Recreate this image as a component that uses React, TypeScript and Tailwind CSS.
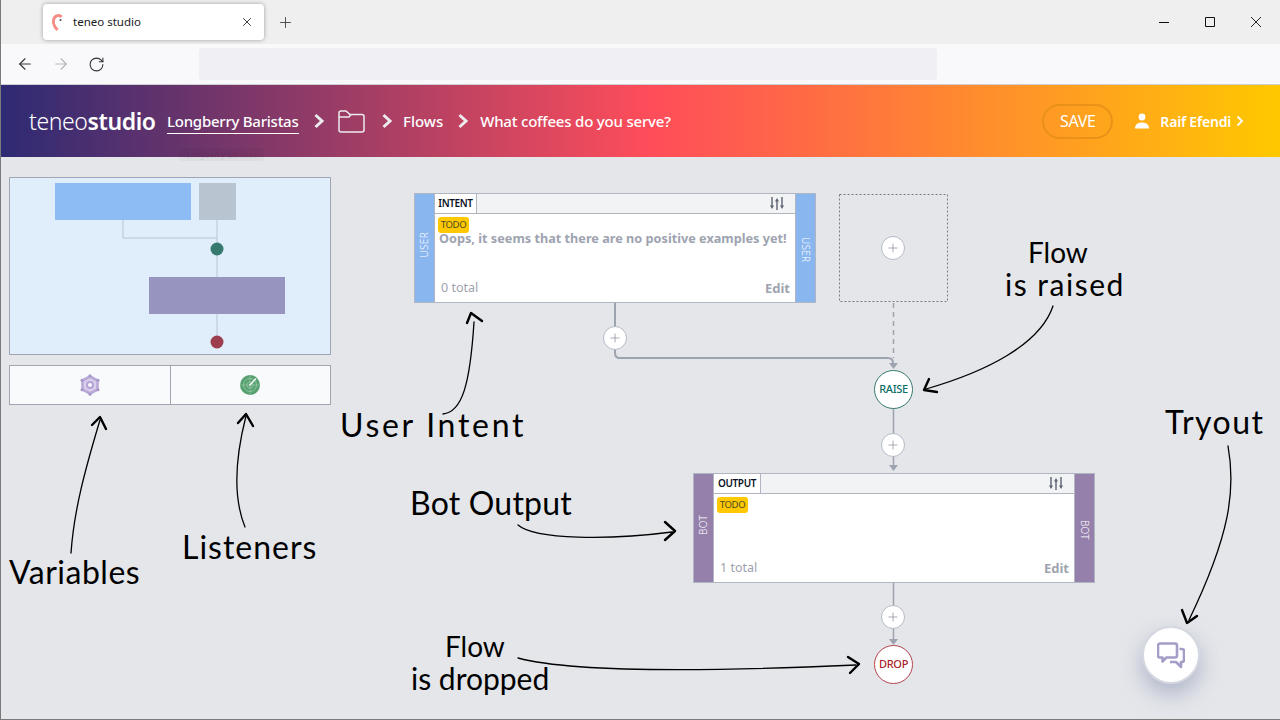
import React from "react";
import { ArrowLeft, ArrowRight, RotateCw, Plus, X } from "lucide-react";

const uiFont = "font-['Noto_Sans','Open_Sans',sans-serif]";
const noteFont = "font-['Lato','Noto_Sans',sans-serif]";

const Chevron = ({ className }: { className: string }) => (
  <svg viewBox="0 0 12 16" className={className} fill="none" stroke="#ecebee" strokeWidth="3">
    <path d="M2.5 2 L9 8 L2.5 14" />
  </svg>
);

// sliders glyph used in the card header
const SlidersGlyph = () => (
  <svg width="14" height="13" viewBox="0 0 14 13" fill="none" stroke="#5c6472" strokeWidth="1.4">
    <path d="M2 0v9M7 4v9M12 0v9" />
    <path d="M0 8.5h4L2 12zM5 4.5h4L7 1zM10 8.5h4L12 12z" fill="#5c6472" stroke="none" />
  </svg>
);

const PlusBubble = ({ className }: { className: string }) => (
  <div className={`absolute w-[24px] h-[24px] rounded-full bg-white border border-[#b4b9c4] flex items-center justify-center ${className}`}>
    <Plus size={14} strokeWidth={1.3} color="#8d93a1" />
  </div>
);

interface CardProps {
  className: string;
  strip: string;
  label: string;
  tab: string;
  tabWidth: string;
  total: string;
  message?: string;
}

const FlowCard: React.FC<CardProps> = ({ className, strip, label, tab, tabWidth, total, message }) => (
  <div className={`absolute w-[402px] h-[110px] flex border border-[#b0b5c2] bg-white ${className}`}>
    <div className={`w-[20px] flex items-center justify-center border-r border-[#b0b5c2] pb-[6px] pr-[1px] ${strip}`}>
      <span className="[writing-mode:vertical-rl] rotate-180 text-[10px] font-light leading-none tracking-[0.3px] text-white">{label}</span>
    </div>
    <div className="flex-1 flex flex-col min-w-0">
      <div className="h-[20px] flex bg-[#f1f3f5] border-b border-[#b0b5c2]">
        <div className={`h-full flex items-center justify-center bg-white border-r border-[#b0b5c2] text-[10px] font-semibold tracking-[-0.35px] text-[#0c1226] ${tabWidth}`}>{tab}</div>
        <div className="ml-auto mr-[11px] flex items-center"><SlidersGlyph /></div>
      </div>
      <div className="flex-1 flex flex-col px-[3px] pt-[3px] pb-[4px]">
        <div className="w-[31px] h-[16px] rounded-[3px] bg-[#ffc800] flex items-center justify-center text-[9.5px] tracking-[-0.3px] text-[#4a4a2a]">TODO</div>
        <div className="h-[13px] mt-[-1px] ml-[1px] text-[12.7px] leading-[13px] font-bold text-[#9ea3b0] whitespace-nowrap">{message}</div>
        <div className="mt-auto flex items-center justify-between pl-[3px] pr-[2px] text-[12.5px] text-[#9ea3b0]">
          <span>{total}</span>
          <span className="text-[13px] font-bold">Edit</span>
        </div>
      </div>
    </div>
    <div className={`w-[20px] flex items-center justify-center border-l border-[#b0b5c2] pt-[4px] ${strip}`}>
      <span className="[writing-mode:vertical-rl] text-[10px] font-light leading-none tracking-[0.3px] text-white">{label}</span>
    </div>
  </div>
);

const Note = ({ className, children }: { className: string; children: React.ReactNode }) => (
  <div className={`absolute ${noteFont} text-black whitespace-nowrap leading-none ${className}`}>{children}</div>
);

export default function App() {
  return (
    <div className={`relative w-[1280px] h-[720px] overflow-hidden flex flex-col bg-[#e4e6ea] ${uiFont}`}>
      {/* tab strip */}
      <div className="h-[44px] shrink-0 bg-[#efefef] flex items-center pl-[43px]">
        <div className="w-[221px] h-[36px] bg-white rounded-[4px] shadow-[0_0_4px_rgba(0,0,0,0.35)] flex items-center pl-[9px] pr-[10px]">
          <svg width="12" height="17" viewBox="0 0 12 17" fill="none">
            <path d="M5.5 16 C1.5 12 0.500 7 2.500 3.500 C4.500 1 8 1 9.500 3" stroke="#f58d86" strokeWidth="3" />
            <circle cx="8.500" cy="6" r="1.100" fill="#555" />
          </svg>
          <span className="ml-[9px] text-[11.500px] text-[#1a1a1a]">teneo studio</span>
          <X size={14} strokeWidth={1.5} color="#222" className="ml-auto" />
        </div>
        <Plus size={17} strokeWidth={1.3} color="#444" className="ml-[13px]" />
        <div className="ml-auto flex items-center pr-[19px] gap-[36px]">
          <svg width="10" height="10" viewBox="0 0 10 10" fill="none" stroke="#111"><path d="M0 5.500H10" /></svg>
          <svg width="10" height="10" viewBox="0 0 10 10" fill="none" stroke="#111"><path d="M.5.5h9v9h-9z" /></svg>
          <svg width="10" height="10" viewBox="0 0 10 10" fill="none" stroke="#111" strokeWidth="0.900"><path d="M0 0L10 10M10 0L0 10" /></svg>
        </div>
      </div>
      {/* toolbar */}
      <div className="h-[41px] shrink-0 bg-[#f9f9fb] border-b border-[#cfd0d3] flex items-center pl-[16px]">
        <ArrowLeft size={18} strokeWidth={1.5} color="#333" />
        <ArrowRight size={18} strokeWidth={1.5} color="#b5b5b8" className="ml-[18px]" />
        <RotateCw size={17} strokeWidth={1.5} color="#333" className="ml-[18px]" />
        <div className="ml-[94px] w-[738px] h-[32px] rounded-[4px] bg-[#f0f0f4]" />
      </div>
      {/* app header */}
      <div className="h-[72px] shrink-0 flex items-center pl-[29px] bg-[linear-gradient(90deg,#2d2a73_0%,#ff4d5a_51%,#ff9527_80%,#ffc800_100%)] text-white">
        <div className="w-[138px] text-[23px] leading-none tracking-[-0.4px]">
          <span className="font-light">teneo</span>
          <span className="font-semibold">studio</span>
        </div>
        <div className="w-[132px] border-b border-white text-[15px] font-medium leading-[24px] whitespace-nowrap tracking-[-0.25px] mt-[1px]">Longberry Baristas</div>
        <Chevron className="w-[12px] h-[16px] ml-[14px]" />
        <svg width="27" height="23" viewBox="0 0 27 23" fill="none" stroke="#ecebee" strokeWidth="1.5" className="ml-[13px]">
          <path d="M1 3a2 2 0 0 1 2-2h5l4 3.500h12a2 2 0 0 1 2 2V20a2 2 0 0 1-2 2H3a2 2 0 0 1-2-2z" />
          <path d="M1 7h10l2-2.500" />
        </svg>
        <Chevron className="w-[12px] h-[16px] ml-[16px]" />
        <span className="ml-[10px] text-[15px] font-medium tracking-[0px]">Flows</span>
        <Chevron className="w-[12px] h-[16px] ml-[14px]" />
        <span className="ml-[11px] text-[15px] font-medium tracking-[-0.2px]">What coffees do you serve?</span>
        <div className="ml-auto flex items-center pr-[36px]">
          <div className="w-[71px] h-[35px] rounded-full border-2 border-[#e99119] flex items-center justify-center text-[16px] tracking-[-0.3px]">SAVE</div>
          <svg width="16" height="16" viewBox="0 0 16 16" fill="#fff" className="ml-[21px]">
            <circle cx="8" cy="4" r="3.400" />
            <path d="M1 15.500c0-4 3-6 7-6s7 2 7 6z" />
          </svg>
          <span className="ml-[10px] text-[14px] font-semibold tracking-[-0.2px]">Raif Efendi</span>
          <svg width="8" height="12" viewBox="0 0 8 12" fill="none" stroke="#fff" strokeWidth="1.800" className="ml-[5px]">
            <path d="M1.500 1.500L6 6l-4.500 4.500" />
          </svg>
        </div>
      </div>

      {/* canvas */}
      <div className="relative flex-1 text-[#9ea3b0]">
        <div className="w-[322px] ml-[9px] mt-[20px] flex flex-col gap-[10px]">
          {/* minimap */}
          <div className="h-[178px] border border-[#9fa5b3] bg-[#e0eefc]">
            <svg width="320" height="176" viewBox="0 0 320 176" fill="none">
              <path d="M113 42V60H207M207 42V165" stroke="#b8c4d0" strokeWidth="1" />
              <rect x="45" y="5" width="136" height="37" fill="#8dbbf3" />
              <rect x="189" y="5" width="37" height="37" fill="#b8c4d0" />
              <circle cx="207" cy="71" r="6.500" fill="#35796f" />
              <rect x="139" y="99" width="136" height="37" fill="#9795bf" />
              <circle cx="207" cy="164" r="6.500" fill="#9c3e4d" />
            </svg>
          </div>
          <div className="h-[40px] border border-[#9fa5b3] bg-[#f9fafc] flex">
            <div className="w-[161px] flex items-center justify-center border-r border-[#9fa5b3]">
              <svg width="20" height="22" viewBox="0 0 20 22" fill="none">
                <path d="M10 2.500L17.500 6.500V15.500L10 19.500L2.500 15.500V6.500Z" stroke="#b9a9d8" strokeWidth="2.600" fill="#d9cfea" strokeLinejoin="round" />
                <circle cx="10" cy="11" r="3" stroke="#b3a3d6" strokeWidth="2" fill="#f9fafc" />
                <g fill="#a795c9">
                  <circle cx="10" cy="1.800" r="1.500" />
                  <circle cx="10" cy="20.200" r="1.500" />
                  <circle cx="2" cy="6.300" r="1.500" />
                  <circle cx="18" cy="6.300" r="1.500" />
                  <circle cx="2" cy="15.700" r="1.500" />
                  <circle cx="18" cy="15.700" r="1.500" />
                </g>
              </svg>
            </div>
            <div className="flex-1 flex items-center justify-center pr-[2px]">
              <svg width="20" height="20" viewBox="0 0 20 20" fill="none">
                <circle cx="10" cy="10" r="10" fill="#57a070" />
                <circle cx="10" cy="10" r="6.500" stroke="#9ccbaa" strokeWidth="0.800" />
                <circle cx="10" cy="10" r="3.200" stroke="#9ccbaa" strokeWidth="0.800" />
                <path d="M10 0v20M0 10h20" stroke="#9ccbaa" strokeWidth="0.600" />
                <path d="M9.500 10.500L16 3.500" stroke="#f4f8f4" strokeWidth="1.500" />
              </svg>
            </div>
          </div>
        </div>

        {/* connectors */}
        <svg className="absolute left-0 top-0" width="1280" height="563" viewBox="0 157 1280 563" fill="none">
          <rect x="839.500" y="194.500" width="108" height="107" stroke="#777c88" strokeDasharray="2 2" />
          <path d="M615 303V353Q615 358 620 358H888Q893 358 893 363" stroke="#9ea3b0" strokeWidth="2" />
          <path d="M893.500 303V358" stroke="#9ea3b0" strokeWidth="1.500" strokeDasharray="5 4" />
          <path d="M889 363h9l-4.500 6z" fill="#9ea3b0" />
          <path d="M893.500 408V466M893.500 582V642" stroke="#9ea3b0" strokeWidth="1.500" />
          <path d="M889 465h9l-4.500 6zM889 639h9l-4.500 6z" fill="#9ea3b0" />
        </svg>

        <FlowCard
          className="left-[414px] top-[36px]"
          strip="bg-[#8ab6ef]"
          label="USER"
          tab="INTENT"
          tabWidth="w-[42px]"
          total="0 total"
          message="Oops, it seems that there are no positive examples yet!"
        />
        <FlowCard
          className="left-[693px] top-[316px]"
          strip="bg-[#9580ab]"
          label="BOT"
          tab="OUTPUT"
          tabWidth="w-[47px]"
          total="1 total"
        />
        <PlusBubble className="left-[881px] top-[79px]" />
        <PlusBubble className="left-[603px] top-[169px]" />
        <PlusBubble className="left-[881px] top-[276px]" />
        <PlusBubble className="left-[881px] top-[448px]" />

        <div className="absolute left-[874px] top-[213px] w-[39px] h-[39px] rounded-full bg-white border border-[#35796f] flex items-center justify-center text-[11px] font-medium tracking-[-0.3px] text-[#0e6f66]">RAISE</div>
        <div className="absolute left-[874px] top-[488px] w-[39px] h-[39px] rounded-full bg-white border border-[#b5434f] flex items-center justify-center text-[11px] font-medium tracking-[-0.3px] text-[#a81f2d]">DROP</div>

        {/* tryout launcher */}
        <div className="absolute left-[1142px] top-[469px] w-[58px] h-[58px] rounded-full bg-white border-2 border-[#d5d8e0] shadow-[0_10px_22px_rgba(140,148,178,0.6)] flex items-center justify-center">
          <svg width="28" height="27" viewBox="0 0 28 27" fill="none" stroke="#a59dc8" strokeWidth="2.600" strokeLinejoin="round">
            <path d="M3 1.500h15a2 2 0 0 1 2 2v10a2 2 0 0 1-2 2H9.500l-4 4v-4H3a2 2 0 0 1-2-2v-10a2 2 0 0 1 2-2z" />
            <path d="M22.500 7h2.500a2 2 0 0 1 2 2v9a2 2 0 0 1-2 2h-1v5l-5-5h-6" />
          </svg>
        </div>

        {/* hand drawn annotations */}
        <svg className="absolute left-0 top-0 pointer-events-none" width="1280" height="563" viewBox="0 157 1280 563" fill="none" stroke="#000" strokeLinecap="round" strokeLinejoin="round">
          <path d="M443 414C462 412 470 385 474 322" strokeWidth="1.300" />
          <path d="M467 323L471 313L482 321" strokeWidth="2.400" />
          <path d="M71 553C74 510 85 470 100 420" strokeWidth="1.300" />
          <path d="M92 425L100 417L106 429" strokeWidth="2.400" />
          <path d="M245 527C232 495 236 455 246 416" strokeWidth="1.300" />
          <path d="M238 423L246 414L253 426" strokeWidth="2.400" />
          <path d="M1053 306C1040 345 985 372 926 389" strokeWidth="1.300" />
          <path d="M929 379L924 390L937 392" strokeWidth="2.400" />
          <path d="M518 525C535 540 610 540 672 532" strokeWidth="1.300" />
          <path d="M665 522L675 531L665 540" strokeWidth="2.400" />
          <path d="M518 658C570 672 700 672 856 665" strokeWidth="1.300" />
          <path d="M848 657L859 664L850 673" strokeWidth="2.400" />
          <path d="M1228 446C1236 490 1230 535 1189 620" strokeWidth="1.300" />
          <path d="M1182 610L1187 623L1197 616" strokeWidth="2.400" />
        </svg>
        <Note className="left-[340px] top-[252px] text-[32px] tracking-[2.700px]">User Intent</Note>
        <Note className="left-[410px] top-[330px] text-[32px] tracking-[0.200px]">Bot Output</Note>
        <Note className="left-[9px] top-[399px] text-[32px] tracking-[0.500px]">Variables</Note>
        <Note className="left-[182px] top-[374px] text-[32px] tracking-[1px]">Listeners</Note>
        <Note className="left-[1005px] top-[78px] text-[30px] !leading-[32px] tracking-[1.500px]">
          <span className="ml-[23px] text-[28px] tracking-[0px]">Flow</span>
          <br />
          is raised
        </Note>
        <Note className="left-[1165px] top-[249px] text-[32px] tracking-[1.500px]">Tryout</Note>
        <Note className="left-[411px] top-[472px] text-[30px] !leading-[32px] tracking-[0px]">
          <span className="ml-[34px] text-[28px]">Flow</span>
          <br />
          is dropped
        </Note>
      </div>

      {/* ghost tooltip and window frame */}
      <div className="absolute left-[179px] top-[148px] w-[85px] h-[13px] rounded-[3px] bg-black/[0.03] text-[8px] leading-[13px] text-center text-black/10 whitespace-nowrap">Longberry Baristas</div>
      <div className="absolute left-0 top-0 bottom-0 w-px bg-[#7a7a7a]" />
      <div className="absolute left-0 right-0 bottom-0 h-px bg-[#7a7a7a]" />
    </div>
  );
}
